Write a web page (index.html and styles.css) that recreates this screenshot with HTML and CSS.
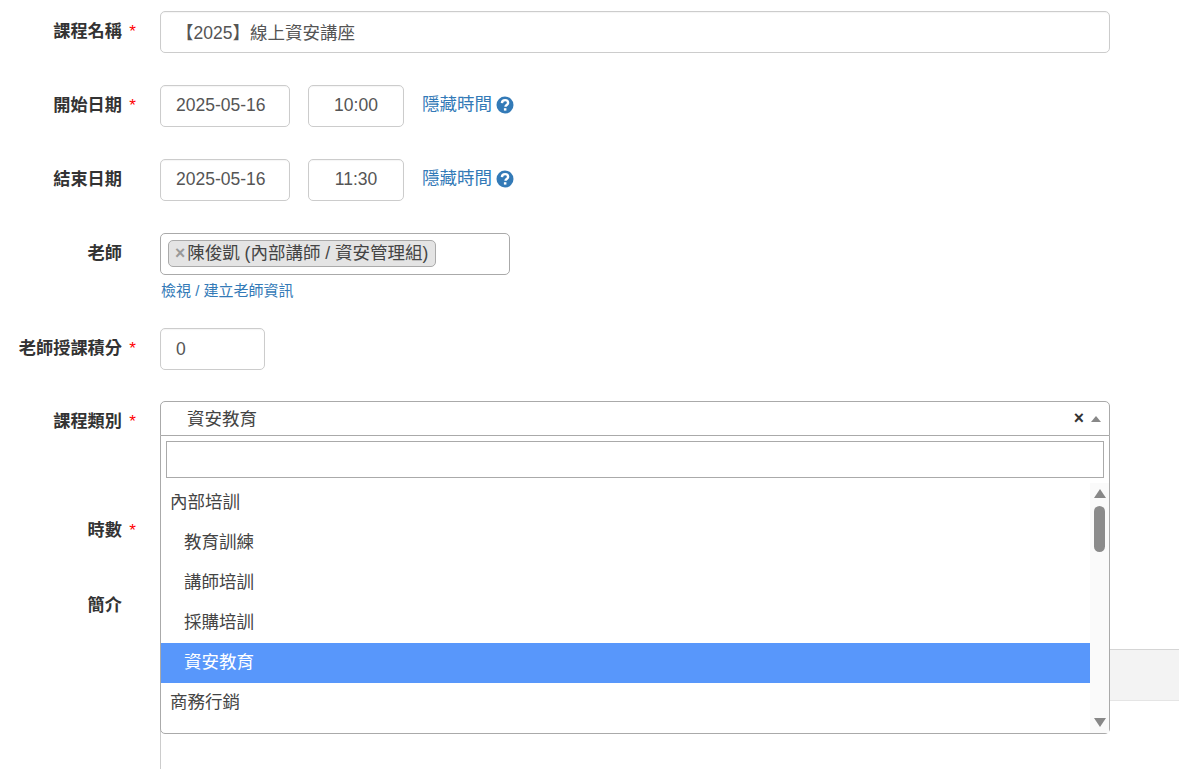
FILE: index.html
```html
<!DOCTYPE html>
<html lang="zh-Hant">
<head>
<meta charset="utf-8">
<title>課程設定</title>
<link rel="stylesheet" href="styles.css">
</head>
<body>
<form class="form">
  <div class="row">
    <label class="label">課程名稱<span class="star">*</span></label>
    <input class="input wide" type="text" value="【2025】線上資安講座">
  </div>
  <div class="row">
    <label class="label">開始日期<span class="star">*</span></label>
    <div class="inline">
      <input class="input date" type="text" value="2025-05-16">
      <input class="input time" type="text" value="10:00">
      <a class="link">隱藏時間</a>
      <svg class="help" viewBox="0 0 18 18"><circle cx="9" cy="9" r="8.5"/><path class="help-q" d="M5.9 7.1c.1-1.9 1.4-3 3.2-3 1.7 0 3 1 3 2.6 0 2.3-2.6 2.2-2.6 4"/><rect class="help-dot" x="7.9" y="12.2" width="2.5" height="2.4"/></svg>
    </div>
  </div>
  <div class="row">
    <label class="label">結束日期<span class="star empty"></span></label>
    <div class="inline">
      <input class="input date" type="text" value="2025-05-16">
      <input class="input time" type="text" value="11:30">
      <a class="link">隱藏時間</a>
      <svg class="help" viewBox="0 0 18 18"><circle cx="9" cy="9" r="8.5"/><path class="help-q" d="M5.9 7.1c.1-1.9 1.4-3 3.2-3 1.7 0 3 1 3 2.6 0 2.3-2.6 2.2-2.6 4"/><rect class="help-dot" x="7.9" y="12.2" width="2.5" height="2.4"/></svg>
    </div>
  </div>
  <div class="row row-teacher">
    <label class="label">老師<span class="star empty"></span></label>
    <div class="field">
      <div class="multi">
        <span class="chip"><span class="chip-x">×</span>陳俊凱 (內部講師 / 資安管理組)</span>
      </div>
      <a class="link small">檢視 / 建立老師資訊</a>
    </div>
  </div>
  <div class="row row-credit">
    <label class="label">老師授課積分<span class="star">*</span></label>
    <input class="input credit" type="text" value="0">
  </div>
  <div class="row row-category">
    <label class="label">課程類別<span class="star">*</span></label>
    <div class="select">
      <div class="select-head">
        <span class="select-value">資安教育</span>
        <span class="select-clear">×</span>
        <span class="arrow-up"></span>
      </div>
      <div class="dropdown">
        <div class="search"><input class="search-input" type="text"></div>
        <div class="results">
          <ul class="list">
            <li class="item">內部培訓</li>
            <li class="item sub">教育訓練</li>
            <li class="item sub">講師培訓</li>
            <li class="item sub">採購培訓</li>
            <li class="item sub active">資安教育</li>
            <li class="item">商務行銷</li>
          </ul>
          <div class="scrollbar">
            <span class="sb-up"></span>
            <span class="sb-thumb"></span>
            <span class="sb-down"></span>
          </div>
        </div>
      </div>
    </div>
  </div>
  <div class="row row-hours">
    <label class="label">時數<span class="star">*</span></label>
    <input class="input credit" type="text" value="1.5">
  </div>
  <div class="row">
    <label class="label">簡介<span class="star empty"></span></label>
    <div class="editor">
      <div class="editor-toolbar"></div>
    </div>
  </div>
</form>
</body>
</html>
```

FILE: styles.css
```css
* { box-sizing: border-box; }
html, body { margin: 0; padding: 0; height: 769px; overflow: hidden; background: #fff; }
body {
  font-family: "Liberation Sans", "Noto Sans CJK TC", sans-serif;
  font-size: 17.5px;
  color: #333;
}
.form { padding-top: 10.8px; width: 1179px; height: 769px; overflow: hidden; }
.row { display: flex; align-items: flex-start; margin-bottom: 32px; }
.row-teacher { margin-bottom: 0; height: 95.5px; }
.row-credit { margin-bottom: 31px; }
.row-category { height: 77px; margin-bottom: 32px; position: relative; z-index: 2; }
.row-hours { margin-bottom: 33px; }
.label {
  flex: none;
  width: 160px;
  padding-right: 24px;
  text-align: right;
  font-size: 17.2px;
  font-weight: 700;
  line-height: 40px;
  white-space: nowrap;
}
.star { display: inline-block; width: 14px; text-align: right; color: #f00; font-weight: 400; }
.input {
  height: 42px;
  padding: 0 15px;
  border: 1px solid #ccc;
  border-radius: 5px;
  background: #fff;
  color: #555;
  font: inherit;
  outline: none;
  box-shadow: inset 0 1px 1px rgba(0, 0, 0, .04);
}
.wide { width: 950px; }
.inline { display: flex; align-items: flex-start; }
.date { width: 130px; margin-right: 18px; }
.time { width: 96px; margin-right: 18px; text-align: center; padding: 0 4px; }
.credit { width: 105px; }
.link { color: #337ab7; text-decoration: none; }
.inline .link { line-height: 39px; }
.help { width: 18px; height: 18px; margin: 11px 0 0 4px; flex: none; }
.help circle { fill: #337ab7; }
.help-q { fill: none; stroke: #fff; stroke-width: 2.4; }
.help-dot { fill: #fff; }
.field { display: flex; flex-direction: column; align-items: flex-start; }
.multi {
  width: 350px;
  height: 42px;
  padding: 6.5px 7px;
  border: 1px solid #aaa;
  border-radius: 5px;
  background: #fff;
}
.chip {
  display: inline-block;
  height: 27px;
  padding: 0 7px 0 6px;
  border: 1px solid #aaa;
  border-radius: 5px;
  background: #e4e4e4;
  line-height: 24px;
  white-space: nowrap;
  color: #444;
}
.chip-x { color: #999; font-weight: 700; margin-right: 2px; }
.small { font-size: 15px; line-height: 20px; margin-top: 6px; margin-left: 1px; }
.select { position: relative; width: 950px; height: 35px; }
.select-head {
  display: flex;
  align-items: center;
  height: 35px;
  padding: 0 8px 2px 26px;
  border: 1px solid #aaa;
  border-radius: 5px 5px 0 0;
  background: #fff;
  color: #444;
}
.select-value { flex: 1; }
.select-clear { font-weight: 700; color: #333; margin: 2px 7px 0 0; line-height: 1; }
.arrow-up { width: 0; height: 0; margin-top: 2px; border-style: solid; border-width: 0 5px 6px; border-color: transparent transparent #888; }
.dropdown {
  position: absolute;
  left: 0;
  top: 34px;
  width: 950px;
  height: 299px;
  border: 1px solid #aaa;
  border-radius: 0 0 5px 5px;
  background: #fff;
}
.search { padding: 5px 5px 5px; }
.search-input {
  display: block;
  width: 100%;
  height: 37px;
  border: 1px solid #aaa;
  background: #fff;
  outline: none;
}
.results { display: flex; height: 250px; }
.list { flex: 1; margin: 0; padding: 0; list-style: none; }
.item { height: 40px; padding: 0 9px; line-height: 39px; color: #444; }
.sub { padding-left: 23px; }
.active { background: #5897fb; color: #fff; }
.scrollbar {
  flex: none;
  width: 19px;
  display: flex;
  flex-direction: column;
  align-items: center;
  background: #fafafa;
  padding-top: 6px;
}
.sb-up { width: 0; height: 0; border-style: solid; border-width: 0 6.5px 9px; border-color: transparent transparent #888; }
.sb-thumb { width: 11px; height: 46px; margin-top: 8px; border-radius: 6px; background: #8b8b8b; }
.sb-down { width: 0; height: 0; margin-top: 166px; border-style: solid; border-width: 9px 6.5px 0; border-color: #888 transparent transparent; }
.editor {
  flex: none;
  width: 1100px;
  height: 300px;
  padding-top: 64px;
  border-left: 1px solid #ccc;
}
.editor-toolbar { height: 52px; background: #f3f3f3; border-top: 1px solid #d5d5d5; border-bottom: 1px solid #e5e5e5; }
```
